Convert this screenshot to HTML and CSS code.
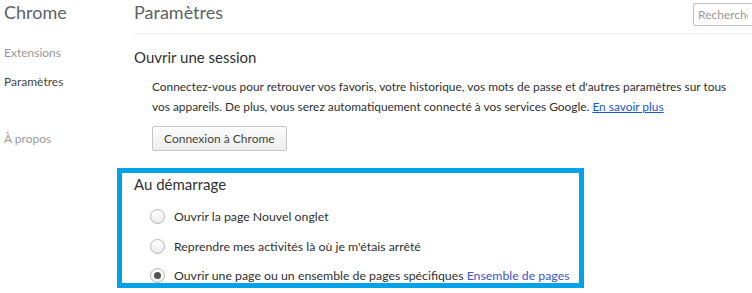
FILE: index.html
```html
<!DOCTYPE html>
<html lang="fr">
<head>
    <meta charset="UTF-8">
    <title>Paramètres</title>
    <link rel="stylesheet" href="styles.css">
</head>
<body>
    <div class="page">
        <div class="sidebar">
            <h1 class="brand">Chrome</h1>
            <ul class="nav">
                <li class="nav-item">Extensions</li>
                <li class="nav-item selected">Paramètres</li>
                <li class="nav-item about">À propos</li>
            </ul>
        </div>

        <div class="main">
            <div class="header">
                <h1 class="title">Paramètres</h1>
                <input class="search" type="search" placeholder="Recherche">
            </div>

            <section class="section">
                <h3 class="section-title">Ouvrir une session</h3>
                <div class="section-body">
                    <p class="text">Connectez-vous pour retrouver vos favoris, votre historique, vos mots de passe et d'autres paramètres sur tous<br>vos appareils. De plus, vous serez automatiquement connecté à vos services Google. <a href="#" class="link">En savoir plus</a></p>
                    <button class="button">Connexion à Chrome</button>
                </div>
            </section>

            <section class="section startup">
                <h3 class="section-title">Au démarrage</h3>
                <div class="radio-list">
                    <label class="radio"><span class="dot"></span><span>Ouvrir la page Nouvel onglet</span></label>
                    <label class="radio"><span class="dot"></span><span>Reprendre mes activités là où je m'étais arrêté</span></label>
                    <label class="radio"><span class="dot checked"></span><span>Ouvrir une page ou un ensemble de pages spécifiques <a href="#" class="plain-link">Ensemble de pages</a></span></label>
                </div>
            </section>
        </div>
    </div>
</body>
</html>
```

FILE: styles.css
```css
body {
    margin: 0;
    font-family: 'Lato', sans-serif;
    font-size: 12.3px;
    color: #303030;
    background-color: #ffffff;
    overflow: hidden;
}

.page {
    display: flex;
}

.sidebar {
    width: 134px;
    flex-shrink: 0;
    padding-left: 4px;
    box-sizing: border-box;
}

.brand {
    margin: 0;
    font-size: 18px;
    font-weight: normal;
    color: #5c6166;
    line-height: 24px;
}

.nav {
    list-style: none;
    margin: 14px 0 0 0;
    padding: 0;
}

.nav-item {
    color: #999;
    line-height: 29px;
    font-size: 12px;
}

.nav-item.selected {
    color: #464646;
}

.nav-item.about {
    margin-top: 28px;
}

.main {
    flex: 1;
}

.header {
    display: flex;
    justify-content: space-between;
    align-items: flex-start;
    border-bottom: 1px solid #eeeeee;
    height: 33px;
}

.title {
    margin: 0;
    font-size: 18px;
    font-weight: normal;
    color: #5c6166;
    line-height: 24px;
}

.search {
    margin-top: 3px;
    width: 72px;
    height: 23px;
    box-sizing: border-box;
    border: 1px solid #bfbfbf;
    border-radius: 2px;
    padding: 0 4px;
    font-family: 'Lato', sans-serif;
    font-size: 12px;
    margin-right: -13px;
}

.search::placeholder {
    color: #999;
}

.section {
    padding-top: 13px;
}

.section-title {
    margin: 0;
    font-size: 15px;
    font-weight: normal;
    color: #303030;
    line-height: 20px;
}

.section-body {
    padding-left: 18px;
    padding-top: 10px;
}

.text {
    margin: 0;
    font-size: 11.9px;
    line-height: 20px;
    white-space: nowrap;
}

.link {
    color: #1558d6;
}

.plain-link {
    color: #3a55cf;
    text-decoration: none;
}

.button {
    margin-top: 9px;
    height: 25px;
    padding: 0 11px;
    font-family: 'Lato', sans-serif;
    font-size: 12px;
    color: #444;
    background: linear-gradient(#fcfcfc, #ededed);
    border: 1px solid #c6c6c6;
    border-radius: 2px;
}

.startup {
    margin-top: 17px;
    margin-left: -17px;
    width: 467px;
    height: 120px;
    box-sizing: border-box;
    border: 5px solid #00a2e8;
    padding: 1px 0 0 12px;
}

.radio-list {
    padding-left: 16px;
    padding-top: 8px;
}

.radio {
    display: flex;
    align-items: center;
    height: 29.5px;
    white-space: nowrap;
}

.dot {
    width: 13px;
    height: 13px;
    border: 1px solid #b5b5b5;
    border-radius: 50%;
    background: linear-gradient(#ffffff, #ececec);
    margin-right: 9px;
    position: relative;
    flex-shrink: 0;
}

.dot.checked::after {
    content: '';
    position: absolute;
    left: 3px;
    top: 3px;
    width: 7px;
    height: 7px;
    border-radius: 50%;
    background: #555;
}
```
